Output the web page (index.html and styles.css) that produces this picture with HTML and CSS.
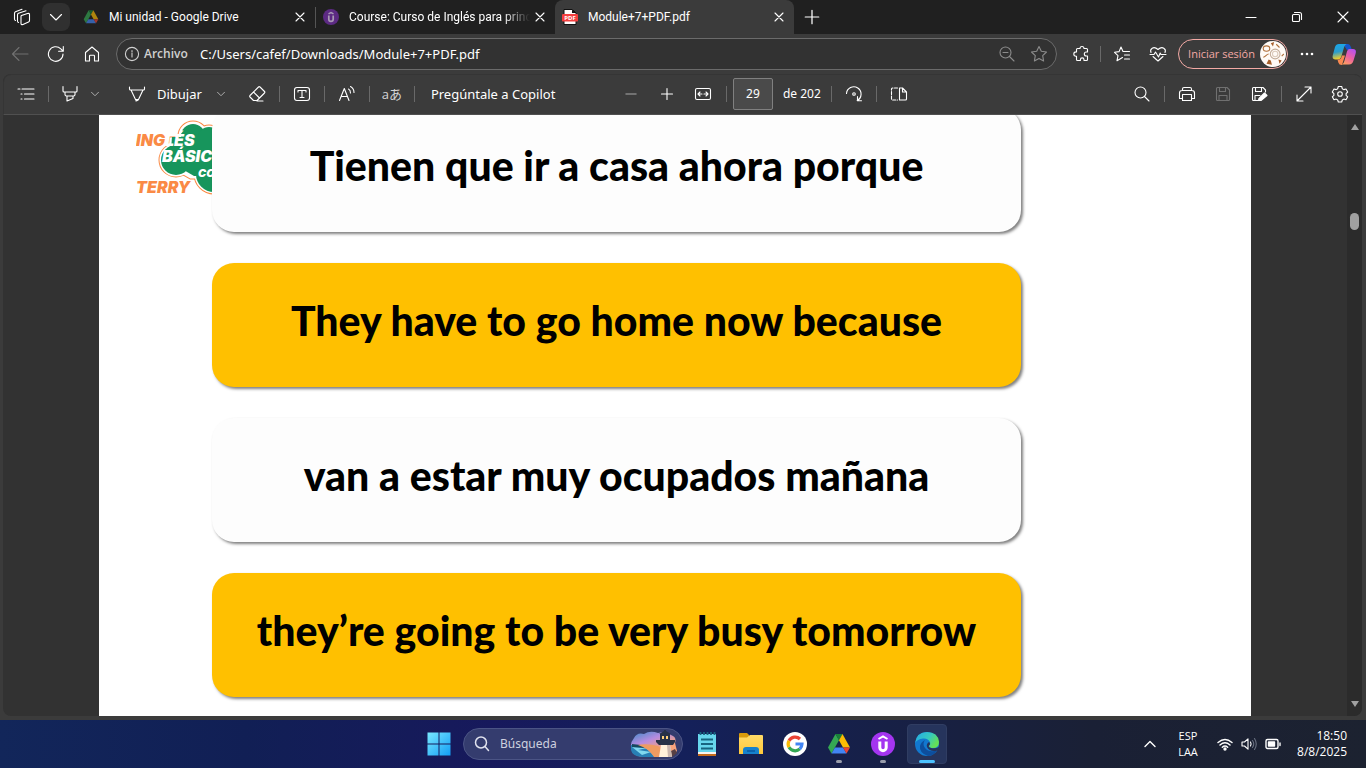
FILE: index.html
```html
<!DOCTYPE html>
<html lang="es">
<head>
<meta charset="utf-8">
<title>Module+7+PDF.pdf</title>
<link rel="stylesheet" href="styles.css">
</head>
<body>
<svg class="defs" aria-hidden="true">
  <defs>
    <symbol id="drive" viewBox="0 0 24 24">
      <path fill="#34a853" d="M8.5 2 1 15.5 4.5 21.500 12 8.200z"/>
      <path fill="#188038" d="M8.500 2h7L12 8.200z"/>
      <path fill="#fbbc04" d="M15.500 2 23 15.500h-7L12 8.200z"/>
      <path fill="#4285f4" d="M8 15.500h8l3.500 6h-15z"/>
      <path fill="#ea4335" d="M16 15.500h7l-3.500 6z"/>
    </symbol>
    <symbol id="close" viewBox="0 0 16 16"><path d="M4 4l8 8M12 4l-8 8"/></symbol>
    <symbol id="chevron" viewBox="0 0 16 16"><path d="M4 6l4 4 4-4"/></symbol>
  </defs>
</svg>

<header class="tabstrip">
  <button class="strip-btn" aria-label="Espacios de trabajo"><svg class="ic" viewBox="0 0 18 18"><path d="M8.500 7.500 14.500 5.500q2-.5 2 1v6q0 1-1 1.500L10 16.500Q8 17 8 15.500V8.500q0-.7.500-1zM5.500 14.500q-1-.3-1-1.500V7q0-1.300 1-1.700L13 2.800M2.500 12.500q-1-.3-1-1.500V5.500q0-1.300 1-1.700L9 1.300"/></svg></button>
  <button class="strip-btn shaded" aria-label="Buscar pestañas"><svg class="ic" viewBox="0 0 18 18"><path d="M3.500 6.500 9 12l5.500-5.500"/></svg></button>
  <nav class="tabs" aria-label="Pestañas">
    <div class="tab divided">
      <svg class="fav dim" viewBox="0 0 24 24"><use href="#drive"/></svg>
      <a class="tab-title" href="#drive-tab">Mi unidad - Google Drive</a>
      <button class="tab-close" aria-label="Cerrar"><svg class="ic" viewBox="0 0 16 16"><use href="#close"/></svg></button>
    </div>
    <div class="tab">
      <svg class="fav" viewBox="0 0 16 16"><circle cx="8" cy="8" r="8" fill="#5c2a83"/><g fill="none" stroke="#a99bb4" stroke-width="1.500"><path d="M5.500 4.800 8 3.500l2.500 1.300"/><path d="M5.800 6.500v3.700a2.200 2.200 0 0 0 4.400 0V6.500" stroke-width="1.700"/></g></svg>
      <a class="tab-title faded" href="#course">Course: Curso de Inglés para princ</a>
      <button class="tab-close" aria-label="Cerrar"><svg class="ic" viewBox="0 0 16 16"><use href="#close"/></svg></button>
    </div>
    <div class="tab active">
      <svg class="fav" viewBox="0 0 16 16"><path fill="#fff" stroke="#111" d="M2 .5h8.500L14 4v11.500H2z"/><path fill="#111" d="M10 .5V4h4z"/><rect y="5" width="16" height="7.500" rx="1" fill="#f43e3e"/><text x="8" y="11" text-anchor="middle" class="pdf-label">PDF</text></svg>
      <a class="tab-title" href="#pdf">Module+7+PDF.pdf</a>
      <button class="tab-close" aria-label="Cerrar"><svg class="ic" viewBox="0 0 16 16"><use href="#close"/></svg></button>
    </div>
  </nav>
  <button class="new-tab" aria-label="Nueva pestaña"><svg class="ic" viewBox="0 0 16 16"><path d="M8 2v12M2 8h12"/></svg></button>
  <div class="window-controls">
    <button aria-label="Minimizar"><svg class="ic" viewBox="0 0 16 16"><path d="M3 8.500h10"/></svg></button>
    <button aria-label="Restaurar"><svg class="ic" viewBox="0 0 16 16"><rect x="3.500" y="5.500" width="7" height="7" rx="1"/><path d="M5.500 3.500h5a2 2 0 0 1 2 2v5"/></svg></button>
    <button aria-label="Cerrar ventana"><svg class="ic" viewBox="0 0 16 16"><path d="M3 3l10 10M13 3L3 13"/></svg></button>
  </div>
</header>

<div class="address-row">
  <button class="nav-btn muted" aria-label="Atrás"><svg class="ic" viewBox="0 0 18 18"><path d="M17 9H1.500M8 2.500 1.500 9 8 15.500"/></svg></button>
  <button class="nav-btn" aria-label="Recargar"><svg class="ic" viewBox="0 0 18 18"><path d="M16 9a7.300 7.300 0 1 1-2.200-5.200L16 6M16.300 1.500V6.200h-4.700"/></svg></button>
  <button class="nav-btn" aria-label="Inicio"><svg class="ic" viewBox="0 0 18 18"><path d="M2.500 7.500 9 2l6.500 5.500V16h-4v-5q0-.8-.8-.8H7.300q-.8 0-.8.8v5h-4z"/></svg></button>
  <div class="omnibox">
    <svg class="ic info" viewBox="0 0 16 16"><circle cx="8" cy="8" r="6.600"/><path d="M8 7v4M8 4.500v1.200"/></svg>
    <label class="scheme" for="url">Archivo</label>
    <input id="url" class="url" type="text" value="C:/Users/cafef/Downloads/Module+7+PDF.pdf">
    <button class="box-btn" aria-label="Zoom"><svg class="ic" viewBox="0 0 18 18"><circle cx="7.500" cy="7.500" r="5.500"/><path d="M11.500 11.500 16 16M5 7.500h5"/></svg></button>
    <button class="box-btn" aria-label="Favorito"><svg class="ic" viewBox="0 0 18 18"><path d="M9 1.500l2.300 4.800 5.200.7-3.800 3.700.9 5.300L9 13.500 4.400 16l.9-5.300L1.500 7l5.200-.7z"/></svg></button>
  </div>
  <div class="browser-actions">
    <button class="ext-btn" aria-label="Extensiones"><svg class="ic" viewBox="0 0 18 18"><path d="M5.500 3.500H8a2 2 0 0 1 4 0h2.500q1 0 1 1V7h-1.200a2 2 0 0 0 0 4h1.200v3.500q0 1-1 1H12v-.8a1.800 1.800 0 0 0-3.600 0v.8H5.500q-1 0-1-1V11.300H4a2.200 2.200 0 0 1 0-4.400h.5V4.500q0-1 1-1z"/></svg></button>
    <span class="sep"></span>
    <button class="nav-btn" aria-label="Favoritos"><svg class="ic" viewBox="0 0 18 18"><path d="M9.500 12.500 4 15.700l1-5L1.500 7.300l4.600-.7L8 2l2 4.500h6.500M11.500 10h5M11.500 14h5"/></svg></button>
    <button class="nav-btn" aria-label="Rendimiento"><svg class="ic" viewBox="0 0 18 18"><path d="M2 7.500C.5 4 4.500.5 9 4.500c4.500-4 8.500-.5 7 3M4 11.500 9 16l5-4.500M1 9.500h4L6.500 7l3 5 1.700-4 .8 1.500h5"/></svg></button>
    <button class="sign-in">Iniciar sesión
      <svg class="avatar" viewBox="0 0 24 24"><circle cx="12" cy="12" r="12" fill="#fffaf6"/><g fill="none" stroke="#b0703c" stroke-width="1"><ellipse cx="6" cy="7" rx="3" ry="2.500"/><circle cx="14" cy="12" r="4.500" stroke="#c4ad9a"/><circle cx="14" cy="12" r="2.500" stroke="#dccbbc"/><path d="M3 15c2 0 3-3 5-3M15 3l3 3M20 14l2-2"/></g><path fill="#a65f2c" d="M6 21l2-4 2 1 1 4zM17 17l3 1-2 3zM10 2l2 3 1-4z"/></svg>
    </button>
    <button class="more-btn" aria-label="Más"><svg class="dots" viewBox="0 0 18 18"><circle cx="4" cy="9" r="1.300"/><circle cx="9" cy="9" r="1.300"/><circle cx="14" cy="9" r="1.300"/></svg></button>
    <button class="nav-btn" aria-label="Copilot"><svg class="copilot" viewBox="0 0 24 24"><defs><linearGradient id="cpa" x2=".2" y2="1"><stop stop-color="#17a9ee"/><stop offset=".55" stop-color="#2c9ccc"/><stop offset="1" stop-color="#f3cd2a"/></linearGradient><linearGradient id="cpb" x1=".8" x2=".2" y2="1"><stop stop-color="#b650ee"/><stop offset=".5" stop-color="#ed61a0"/><stop offset="1" stop-color="#ffa25b"/></linearGradient></defs><path fill="#1654cb" d="M11 2h5q2 0 2.700 2.500L20 8h-5z"/><path fill="url(#cpa)" d="M7 2h8q-2 0-3 3.500L9.500 14q-1 3.500-4 3.500H3.500q-4 0-2.500-5L3 5q1-3 4-3z"/><path fill="#f98951" d="M7 17.500q2 0 3-4h3L10 23q-3 0-3.700-2.500L5.500 17.500z"/><path fill="url(#cpb)" d="M17.500 7H21q4 0 2.500 5l-2 6.500q-1 4-4.500 4H9q2.500 0 3.500-4l2.200-8Q15.500 7 17.500 7z"/></svg></button>
  </div>
</div>

<main class="viewer">
  <div class="pdf-bar" role="toolbar" aria-label="Herramientas de PDF">
    <button class="tool" aria-label="Contenido"><svg class="ic" viewBox="0 0 18 18"><path d="M1 4h2M5 4h12M4 9h1M7.500 9H17M4 14h1M7.500 14H17"/></svg></button>
    <span class="sep"></span>
    <button class="tool mark" aria-label="Resaltar"><svg class="ic" viewBox="0 0 18 18"><path d="M2 1.500V6q0 1 1 1h12q1 0 1-1V1.500M4 7v2.500q0 1.500 1.500 1.500h7Q14 11 14 9.500V7M6 11v5l6-2.500V11"/></svg></button>
    <button class="drop" aria-label="Opciones de resaltado"><svg class="ic" viewBox="0 0 16 16"><use href="#chevron"/></svg></button>
    <button class="draw"><svg class="ic" viewBox="0 0 18 18"><path d="M1.500 2v2q0 1 1 1h13q1 0 1-1V2M3 5l4.500 9.500h3L15 5M8 14.500V16l2-.7"/></svg>Dibujar</button>
    <button class="drop" aria-label="Opciones de dibujo"><svg class="ic" viewBox="0 0 16 16"><use href="#chevron"/></svg></button>
    <button class="tool eraser" aria-label="Borrar"><svg class="ic" viewBox="0 0 18 18"><path d="M2 10.500 10.500 2q.7-.7 1.500 0l4.500 4.500q.7.700 0 1.500L9 15.500H5.500L2 12q-.7-.7 0-1.500zM5.500 7l6 6M9 16h6"/></svg></button>
    <span class="sep"></span>
    <button class="tool" aria-label="Agregar texto"><svg class="ic" viewBox="0 0 18 18"><rect x="1.500" y="2.500" width="15" height="13" rx="2.500"/><path d="M5 7V5.500h8V7M9 5.500v7M7 12.500h4"/></svg></button>
    <span class="sep"></span>
    <button class="tool" aria-label="Leer en voz alta"><svg class="ic" viewBox="0 0 18 18"><path d="M1.500 15.500 6.300 3.500l4.700 12M3 11.500h6.500M10.500 4q2 1 2 4M12.500 1.500q3.500 2 3.500 6"/></svg></button>
    <span class="sep"></span>
    <button class="tool translate" aria-label="Traducir">aあ</button>
    <span class="sep"></span>
    <button class="ask">Pregúntale a Copilot</button>
    <div class="group">
      <button class="tool muted" aria-label="Alejar"><svg class="ic thick" viewBox="0 0 18 18"><path d="M4 9h10"/></svg></button>
      <button class="tool" aria-label="Acercar"><svg class="ic" viewBox="0 0 18 18"><path d="M3.500 9h11M9 3.500v11"/></svg></button>
      <button class="tool" aria-label="Ajustar al ancho"><svg class="ic" viewBox="0 0 18 18"><rect x="1.500" y="3.500" width="15" height="11" rx="1.500"/><path d="M4 9h4M10 9h4M6 7 4 9l2 2M12 7l2 2-2 2"/></svg></button>
    </div>
    <span class="sep"></span>
    <input class="page-number" type="text" value="29" aria-label="Número de página">
    <span class="page-total">de 202</span>
    <span class="sep"></span>
    <button class="tool" aria-label="Girar"><svg class="ic" viewBox="0 0 18 18"><path d="M1.500 8.500a7.300 7.300 0 1 1 10.700 7M12.500 11.500v4.300h4"/><circle cx="9" cy="9" r="1.300"/></svg></button>
    <span class="sep"></span>
    <button class="tool" aria-label="Vista de página"><svg class="ic" viewBox="0 0 18 18"><path d="M9.500 3v12h6q1 0 1-1V7l-4-4zM12.500 3v4h4"/><path stroke-dasharray="3 1.500" d="M7.500 3H2.500q-1 0-1 1v10q0 1 1 1h5"/></svg></button>
    <div class="group end">
      <button class="tool" aria-label="Buscar"><svg class="ic" viewBox="0 0 18 18"><circle cx="7.500" cy="7.500" r="5.500"/><path d="M11.500 11.500 16 16"/></svg></button>
      <span class="sep"></span>
      <button class="tool" aria-label="Imprimir"><svg class="ic" viewBox="0 0 18 18"><path d="M4.500 5.500V4q0-1.500 1.500-1.500h6q1.500 0 1.500 1.500v1.500M4.500 13.500h-3V8Q1.500 5.500 4 5.500h10Q16.500 5.500 16.500 8v5.500h-3M4.500 9.500h9v6h-9z"/></svg></button>
      <button class="tool disabled" aria-label="Guardar" disabled><svg class="ic" viewBox="0 0 18 18"><path d="M2.500 3.500q0-1 1-1H13L15.500 5v9.500q0 1-1 1h-11q-1 0-1-1zM5.500 2.500v4h6v-4M5 15.500v-5h8v5"/></svg></button>
      <button class="tool" aria-label="Guardar como"><svg class="ic" viewBox="0 0 18 18"><path d="M8 15.500H3.500q-1 0-1-1v-11q0-1 1-1H13L15.500 5v2M5.500 2.500v4h6v-4M5 15.500v-5h5"/><path fill="currentColor" d="M9 13.500 14.500 8 17 10.500 11 15.500H8.500z"/></svg></button>
      <span class="sep"></span>
      <button class="tool" aria-label="Pantalla completa"><svg class="ic" viewBox="0 0 18 18"><path d="M2 16 16 2M10 2h6v6M2 10v6h6"/></svg></button>
      <button class="tool" aria-label="Configuración"><svg class="ic" viewBox="0 0 18 18"><circle cx="9" cy="9" r="2.300"/><path d="M7.300 1.500h3.400l.6 2.200 1.500.9 2.200-.6 1.700 3-1.600 1.600v1.700l1.600 1.500-1.700 3-2.200-.7-1.500.9-.6 2H7.300l-.6-2-1.500-.9-2.200.7-1.700-3 1.600-1.500V8.600L1.300 7l1.700-3 2.200.6 1.500-.9z"/></svg></button>
    </div>
  </div>

  <div class="canvas">
    <article class="page">
      <svg class="logo" viewBox="0 0 110 78" role="img" aria-label="Inglés Básico con Terry">
        <g stroke="#fa8a45" stroke-width="7" fill="#fa8a45"><circle cx="57" cy="16" r="12"/><circle cx="73" cy="18" r="10"/><circle cx="40" cy="40" r="14"/><circle cx="78" cy="54" r="17"/><path d="M36 20h48v36H55L34 44z"/></g>
        <g stroke="#fff" stroke-width="5" fill="#fff"><circle cx="57" cy="16" r="12"/><circle cx="73" cy="18" r="10"/><circle cx="40" cy="40" r="14"/><circle cx="78" cy="54" r="17"/><path d="M36 20h48v36H55L34 44z"/></g>
        <g fill="#17955c"><circle cx="57" cy="16" r="12"/><circle cx="73" cy="18" r="11"/><circle cx="40" cy="40" r="15"/><circle cx="78" cy="54" r="18"/><path d="M36 17h50v39H58L34 42z"/></g>
        <g class="logo-text"><text x="0" y="26"><tspan class="orange">ING</tspan><tspan>LÉS</tspan></text><text x="26" y="42">BÁSICO</text><text x="62" y="57" class="small">CON</text><text x="0" y="73" class="orange">TERRY</text></g>
      </svg>
      <ul class="phrases">
        <li class="phrase">Tienen que ir a casa ahora porque</li>
        <li class="phrase gold">They have to go home now because</li>
        <li class="phrase">van a estar muy ocupados mañana</li>
        <li class="phrase gold">they’re going to be very busy tomorrow</li>
      </ul>
    </article>
    <div class="scrollbar" aria-hidden="true">
      <svg class="arrow" viewBox="0 0 10 8"><path d="M5 1 9 7H1z"/></svg>
      <span class="thumb"></span>
      <svg class="arrow last" viewBox="0 0 10 8"><path d="M1 1h8L5 7z"/></svg>
    </div>
  </div>
</main>

<footer class="taskbar">
  <div class="apps">
    <button class="app" aria-label="Inicio"><svg viewBox="0 0 24 24"><defs><linearGradient id="win" gradientUnits="userSpaceOnUse" x2="24" y2="24"><stop stop-color="#7be9ff"/><stop offset="1" stop-color="#109cf5"/></linearGradient></defs><path fill="url(#win)" d="M.5.500h11v11H.5zM12.500.500h11v11h-11zM.5 12.500h11v11H.5zM12.500 12.500h11v11h-11z"/></svg></button>
    <label class="search">
      <svg class="ic search-icon" viewBox="0 0 18 18"><circle cx="8" cy="7.500" r="5.500"/><path d="M12 11.500 15.500 15.500"/></svg>
      <input type="text" placeholder="Búsqueda" aria-label="Búsqueda">
      <svg class="lighthouse" viewBox="0 0 48 28"><defs><linearGradient id="sky" y2="1" x2=".7"><stop stop-color="#398bc8"/><stop offset=".4" stop-color="#b58be0"/><stop offset=".75" stop-color="#f6a37c"/></linearGradient></defs><path fill="url(#sky)" d="M4 8Q7 2 14 4q6-4 14-1 8-2 13 2 6 2 4 8l2 8-6 6H14Q3 26 2 20-1 14 4 8z"/><path fill="#287fb5" d="M1 15q10 0 16 4l8 8H12Q2 26 1 20z"/><path fill="#80d8ef" d="M2 17l15 1-9 2 13 2-9 3z"/><path fill="#17485e" d="M2 14l9 1 5 3-14-1z"/><path fill="#ee9b61" d="M8 15q9-2 20 1l4 3-3 8h-5q-4-8-16-12z"/><path fill="#574044" d="M39 22l6-3 2 4-5 4h-5z"/><path fill="#fff1db" d="M31 15h9l2 12H29z"/><path fill="#cbb8b0" d="M37 15h3l2 12h-4z"/><path fill="#263248" d="M26 10h19v2l-2 3H29l-3-3zM30 4h10v6H30zM29 4l5-3V0h2v1l5 3z"/><path fill="#ffd27b" d="M32 6h2v3h-2zM36 6h2v3h-2z"/></svg>
    </label>
    <button class="app" aria-label="Bloc de notas"><svg viewBox="0 0 24 24"><path fill="#67d6ed" d="M3 2h18v19H3z"/><path fill="#f7f4ef" d="M3 20h18v2H3z"/><path fill="#c36b1c" d="M3 22h18v2H3z"/><g stroke="#176480" stroke-width="1.800"><path d="M6 7.500h12M6 12h12M6 16.500h12M5.500 0v3M9 0v3M12.500 0v3M16 0v3M19.500 0v3"/></g></svg></button>
    <button class="app" aria-label="Explorador"><svg viewBox="0 0 24 24"><defs><linearGradient id="fold" y2="1" x2="0"><stop stop-color="#ffda68"/><stop offset="1" stop-color="#ffc83a"/></linearGradient></defs><path fill="#d99a0b" d="M0 2q0-1 1-1h7l2 2v5H0z"/><path fill="url(#fold)" d="M0 5.500h8L11 3h12q1 0 1 1v18H0z"/><path fill="#1681cd" d="M4 22v-4q0-3 3-3h10q3 0 3 3v4z"/><path stroke="#0959a0" stroke-width="1.500" d="M8 19h8"/></svg></button>
    <button class="app" aria-label="Google"><svg viewBox="0 0 24 24"><circle cx="12" cy="12" r="12" fill="#fff"/><g fill="none" stroke-width="3.200"><path stroke="#ea4335" d="M6 8.700A7 7 0 0 1 17 7"/><path stroke="#fbbc05" d="M6 8.700a7 7 0 0 0 0 6.600"/><path stroke="#34a853" d="M6 15.300a7 7 0 0 0 10.800 1.600"/><path stroke="#4285f4" d="M12.500 12H19a7 7 0 0 1-2.200 5"/></g></svg></button>
    <button class="app running" aria-label="Google Drive"><svg viewBox="0 0 24 24"><use href="#drive"/></svg></button>
    <button class="app running" aria-label="Udemy"><svg viewBox="0 0 24 24"><circle cx="12" cy="12" r="12" fill="#a435f0"/><g fill="none" stroke="#fff"><path stroke-width="2" d="M7.500 7 12 4.500 16.500 7"/><path stroke-width="3" d="M8.800 9.500v6a3.200 3.200 0 0 0 6.400 0v-6"/></g></svg></button>
    <button class="app current" aria-label="Edge"><svg viewBox="0 0 24 24"><defs><linearGradient id="eg" x2="1" y2=".5"><stop stop-color="#24a9e8"/><stop offset=".6" stop-color="#36c9bd"/><stop offset="1" stop-color="#65df55"/></linearGradient></defs><circle cx="12" cy="12" r="12" fill="#1278cf"/><path fill="url(#eg)" d="M.2 11Q1.500 0 12 0q11 0 12 10 0 6-6 6-3.500 0-4-2 2-1.500 1-4-2-4-7-3.500Q2 7 .2 11z"/><path fill="#0d4e9d" d="M10 8q-3 4 0 8 4 5 12 2.500Q18 24 13 24 4 21 5 14q1-4 5-6z"/><path fill="#26345c" d="M14 10q-3 2-2 5 2 4 7 4 4 0 5-2v-2q-4 2-8 1-3-1-2-2.500 2-1.500 0-3.500z"/></svg></button>
  </div>
  <div class="tray">
    <button class="tray-up" aria-label="Iconos ocultos"><svg class="ic bold" viewBox="0 0 16 16"><path d="M3 10.500 8 5.500l5 5"/></svg></button>
    <button class="lang"><span>ESP</span><span>LAA</span></button>
    <button class="status" aria-label="Red, volumen y batería">
      <svg class="ic bold" viewBox="0 0 16 16"><path d="M1 6.500q7-6 14 0M3 9q5-4.500 10 0M5.300 11.300q2.700-2.500 5.400 0"/><circle cx="8" cy="13" r="1" fill="currentColor"/></svg>
      <svg class="ic" viewBox="0 0 16 16"><path d="M1 6h2.500L7 2.800v10.400L3.500 10H1zM9.500 6q1.200 2 0 4"/><path class="faint" d="M11.500 4.500q2.500 3.500 0 7M13.500 2.500q3.500 5.500 0 11"/></svg>
      <svg class="ic bold" viewBox="0 0 16 16"><rect x="1" y="3.500" width="12" height="9" rx="1.500"/><path d="M15 7v2.500"/><path fill="currentColor" d="M3.500 6h6v4h-6z"/></svg>
    </button>
    <button class="clock"><span>18:50</span><span>8/8/2025</span></button>
  </div>
</footer>
</body>
</html>
```
FILE: styles.css
```css
* { box-sizing: border-box; }

body {
  margin: 0;
  height: 100vh;
  display: flex;
  flex-direction: column;
  overflow: hidden;
  background: #3b3b3b;
  color: #fff;
  font: 12px/16px "Open Sans", "Noto Sans", sans-serif;
}

button, input { font: inherit; color: inherit; background: none; border: 0; padding: 0; margin: 0; }
button { display: flex; align-items: center; justify-content: center; flex-shrink: 0; }
a { color: inherit; text-decoration: none; }
svg { display: block; flex-shrink: 0; }

.defs { position: absolute; width: 0; height: 0; }
.ic { width: 18px; height: 18px; fill: none; stroke: currentColor; stroke-width: 1.1; stroke-linejoin: round; stroke-linecap: round; }
.ic.thick { stroke-width: 1.5; }
.ic.bold { stroke-width: 1.4; }
.ic .faint { stroke: #697080; }
.muted { color: #858585; }
.sep { flex-shrink: 0; width: 1px; height: 16px; margin: 0 5px; background: #696969; }

/* Tabs */
.tabstrip { display: flex; align-items: center; height: 34px; flex-shrink: 0; padding-left: 8px; background: #202020; }
.strip-btn { width: 28px; height: 28px; margin-right: 6px; border-radius: 8px; }
.shaded { background: #303030; }
.tabs { display: flex; align-self: stretch; flex: 0 1 718px; min-width: 0; }
.tab { display: flex; flex: 1; align-items: center; gap: 10px; min-width: 0; padding: 0 7px; }
.tab.divided { border-right: 1px solid transparent; border-image: linear-gradient(transparent 8px, #555 8px, #555 27px, transparent 27px) 1; }
.tab.active { background: #3b3b3b; border-radius: 8px 8px 0 0; }
.fav { width: 16px; height: 16px; }
.fav.dim { opacity: .65; }
.pdf-label { font: bold 6px "Open Sans", sans-serif; fill: #fff; }
.tab-title { flex: 1; overflow: hidden; white-space: nowrap; font-family: Roboto, sans-serif; }
.tab-title.faded { margin-right: -8px; mask-image: linear-gradient(90deg, #000 85%, transparent); }
.tab-close .ic { width: 16px; height: 16px; }
.new-tab { width: 36px; height: 32px; }
.window-controls { display: flex; margin-left: auto; }
.window-controls button { width: 46px; height: 34px; }
.window-controls .ic { width: 16px; height: 16px; }

/* Address bar */
.address-row { display: flex; align-items: center; height: 40px; flex-shrink: 0; padding: 0 4px 0 2px; }
.nav-btn { width: 36px; height: 32px; }
.nav-btn.muted { color: #707070; }
.omnibox { display: flex; align-items: center; flex: 1; min-width: 0; height: 32px; margin: 0 8px 0 6px; padding: 0 1px 0 7px; background: #323232; border: 1px solid #6b6b6b; border-radius: 16px; }
.info { width: 16px; height: 16px; margin-right: 4px; color: #d0d0d0; }
.scheme { width: 56px; color: #d0d0d0; font-weight: 600; }
.url { flex: 1; min-width: 0; height: 24px; font: 13px "Noto Sans", sans-serif; }
.box-btn { width: 32px; height: 28px; color: #8c8c8c; }
.browser-actions { display: flex; align-items: center; }
.ext-btn { width: 32px; height: 32px; }
.browser-actions .sep { margin: 0 3px; }
.sign-in { width: 110px; height: 30px; gap: 5px; margin-left: 2px; border: 1px solid #f3aaa5; border-radius: 15px; justify-content: flex-end; padding-right: 1px; color: #f3aaa5; font-size: 11px; white-space: nowrap; }
.avatar { width: 26px; height: 26px; }
.more-btn { width: 38px; height: 32px; }
.dots { width: 18px; height: 18px; fill: currentColor; }
.copilot { width: 24px; height: 24px; }

/* PDF viewer */
.viewer { display: flex; flex-direction: column; flex: 1; min-height: 0; margin: 0 4px 4px 3px; border-radius: 8px; overflow: hidden; background: #323232; }
.pdf-bar { display: flex; align-items: center; height: 41px; flex-shrink: 0; padding: 0 4px 2px 5px; background: #3b3b3b; border-top: 1px solid #353535; border-left: 1px solid #353535; border-bottom: 1px solid #505050; border-radius: 8px 8px 0 0; font: 13px/16px "Noto Sans", sans-serif; }
.tool { width: 34px; height: 32px; }
.mark { width: 32px; }
.drop { width: 18px; height: 32px; color: #b0b0b0; }
.drop .ic { width: 14px; height: 14px; }
.draw { gap: 11px; padding: 0 10px 0 24px; }
.eraser { margin-left: 10px; }
.translate { font: 13px "Open Sans", "Noto Sans CJK JP", sans-serif; color: #d5d5d5; }
.ask { justify-content: flex-start; width: 193px; padding-left: 11px; white-space: nowrap; }
.group { display: flex; align-items: center; }
.group .tool { width: 36px; }
.group .sep { margin: 0 4px; }
.group.end { margin-left: auto; }
.page-number { width: 40px; height: 32px; margin-left: 1px; text-align: center; background: #4a4a4a; border: 1px solid #808080; border-radius: 2px; font-size: 12px; }
.page-total { width: 53px; padding-left: 10px; font-size: 12px; white-space: nowrap; }
.disabled { color: #707070; }

.canvas { display: flex; flex: 1; min-height: 0; }
.page { position: relative; flex: 1; min-width: 0; margin: 0 96px; overflow: hidden; background: #fff; }
.logo { position: absolute; left: 37px; top: 5px; width: 110px; height: 78px; }
.logo-text { font: italic 900 16px "Inter", sans-serif; fill: #fff; }
.logo-text .orange { fill: #fa8a45; }
.logo-text .small { font-size: 11px; }
.phrases { position: relative; display: flex; flex-direction: column; gap: 31px; list-style: none; width: 809px; max-width: 100%; margin: -7px 0 0 113px; padding: 0; }
.phrase { display: flex; align-items: center; justify-content: center; height: 124px; padding-bottom: 8px; border-radius: 22px; background: #fdfdfd; box-shadow: 2px 2px 3px rgba(0, 0, 0, .5); color: #000; font: 900 41px/48px "Lato", sans-serif; white-space: nowrap; }
.gold { background: #ffc000; }
.scrollbar { display: flex; flex-direction: column; align-items: center; width: 15px; padding: 8px 0; background: #2b2b2b; }
.arrow { width: 10px; height: 8px; fill: #a0a0a0; }
.thumb { width: 9px; height: 17px; margin-top: 82px; border-radius: 5px; background: #a0a0a0; }
.arrow.last { margin-top: auto; }

/* Taskbar */
.taskbar { display: grid; grid-template-columns: 1fr auto 1fr; align-items: center; height: 48px; flex-shrink: 0; background: linear-gradient(90deg, #12265a 0, #111f55 18%, #17195c 36%, #14205a 50%, #172046 65%, #1a2035 80%, #1c2230 100%); }
.apps { grid-column: 2; display: flex; align-items: center; gap: 4px; }
.app { position: relative; width: 40px; height: 40px; border-radius: 4px; }
.app svg { width: 24px; height: 24px; }
.running::after, .current::after { content: ""; position: absolute; bottom: 1px; left: 50%; width: 6px; height: 3px; margin-left: -3px; border-radius: 2px; background: #9a9eac; }
.current { background: #26345c; border: 1px solid #303d62; }
.current::after { bottom: 0; width: 16px; margin-left: -8px; background: #4cc2ff; }
.search { display: flex; align-items: center; width: 220px; height: 32px; padding: 0 4px 0 9px; background: #343c6e; border: 1px solid #4b5485; border-radius: 16px; }
.search-icon { stroke-width: 1.5; margin-right: 9px; color: #e0e2ee; }
.search input { flex: 1; min-width: 0; font-family: "Noto Sans", sans-serif; }
.search input::placeholder { color: #cdd0df; opacity: 1; }
.lighthouse { width: 48px; height: 28px; }
.tray { display: flex; align-items: center; justify-content: flex-end; padding-right: 19px; }
.tray-up { width: 32px; height: 40px; }
.tray .ic { width: 16px; height: 16px; }
.lang { flex-direction: column; width: 44px; font-size: 11px; }
.status { gap: 8px; width: 78px; }
.clock { flex-direction: column; align-items: flex-end; width: 59px; font-size: 12px; }
```
